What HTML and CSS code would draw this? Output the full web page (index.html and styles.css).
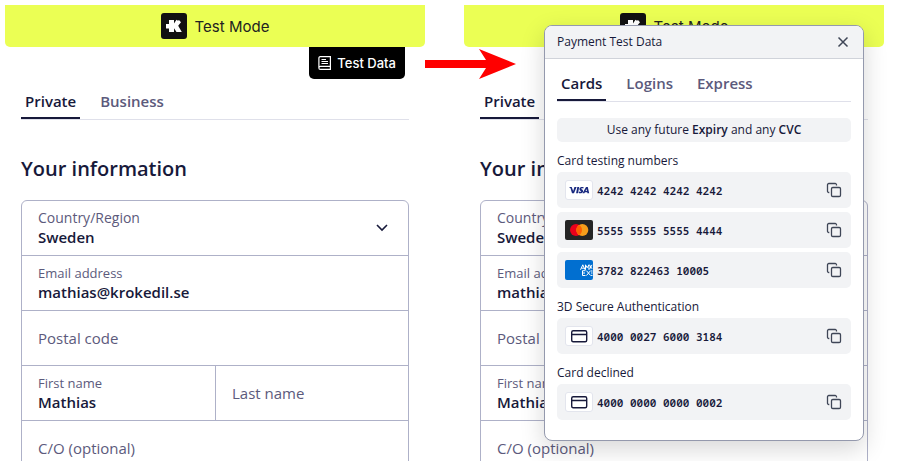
FILE: index.html
```html
<!DOCTYPE html>
<html lang="en">
<head>
    <meta charset="UTF-8">
    <meta name="viewport" content="width=device-width, initial-scale=1.0">
    <title>Payment Test Data</title>
    <link rel="stylesheet" href="styles.css">
</head>
<body>
    <!-- Shared icons -->
    <svg class="sprite" aria-hidden="true">
        <symbol id="icon-logo" viewBox="0 0 26 26">
            <rect width="26" height="26" rx="3" fill="#111"/>
            <path d="M8 7h5v3.500L15.500 6.800 17 7.800l1-.8 2 2.200-2.800 3.500L20.800 19h-5.300l-2.500-3.800V19H8v-3.500H5v-4.500h3z" fill="#fff"/>
        </symbol>
        <symbol id="icon-chevron" viewBox="0 0 12 8">
            <path d="M1 1l5 5 5-5" fill="none" stroke="currentColor" stroke-width="1.600"/>
        </symbol>
        <symbol id="icon-copy" viewBox="0 0 16 16">
            <rect x="5.500" y="5.500" width="9" height="9" rx="1.300" fill="none" stroke="currentColor" stroke-width="1.300"/>
            <path d="M3.300 10.500h-.5A1.300 1.300 0 0 1 1.500 9.200V2.800a1.300 1.300 0 0 1 1.300-1.300h6.400a1.300 1.300 0 0 1 1.300 1.300v.6" fill="none" stroke="currentColor" stroke-width="1.300"/>
        </symbol>
        <symbol id="icon-card" viewBox="0 0 28 20">
            <rect x="6.700" y="4.700" width="15" height="11" rx="1.500" fill="none" stroke="currentColor" stroke-width="1.400"/>
            <path d="M6.500 8.500h15.500" stroke="currentColor" stroke-width="1.400"/>
        </symbol>
    </svg>

    <main class="compare">
        <section class="checkout">
            <div class="banner">
                <svg class="logo" aria-hidden="true"><use href="#icon-logo"/></svg>
                <span>Test Mode</span>
            </div>
            <div class="toolbar">
                <button type="button" class="test-data">
                    <svg width="14" height="16" viewBox="0 0 14 16" fill="none" stroke="currentColor" stroke-width="1.200" aria-hidden="true">
                        <path d="M2.400 1.600h10v9.800h-10a1.500 1.500 0 0 0 0 3h10v-3M.9 13V3a1.400 1.400 0 0 1 1.500-1.400M3.500 4.500h4.500M3.500 6.500h6.500M3.500 8.500h6.500"/>
                    </svg>
                    Test Data
                </button>
            </div>
            <form class="customer">
                <div class="tabs">
                    <button type="button" class="tab active">Private</button>
                    <button type="button" class="tab">Business</button>
                </div>
                <h2>Your information</h2>
                <div class="fields">
                    <label class="field country">
                        <span>Country/Region</span>
                        <select><option>Sweden</option></select>
                        <svg class="chevron" aria-hidden="true"><use href="#icon-chevron"/></svg>
                    </label>
                    <label class="field">
                        <span>Email address</span>
                        <input type="email" value="mathias@krokedil.se">
                    </label>
                    <div class="field">
                        <input type="text" placeholder="Postal code" aria-label="Postal code">
                    </div>
                    <div class="names">
                        <label class="field">
                            <span>First name</span>
                            <input type="text" value="Mathias">
                        </label>
                        <div class="field">
                            <input type="text" placeholder="Last name" aria-label="Last name">
                        </div>
                    </div>
                    <div class="field">
                        <input type="text" placeholder="C/O (optional)" aria-label="C/O (optional)">
                    </div>
                </div>
            </form>
            <svg class="arrow" viewBox="0 0 91 30" aria-hidden="true">
                <path d="M0 11h61L54 0l37 15-37 15 7-11H0z" fill="#f00"/>
            </svg>
        </section>

        <section class="checkout">
            <div class="banner">
                <svg class="logo" aria-hidden="true"><use href="#icon-logo"/></svg>
                <span>Test Mode</span>
            </div>
            <div class="toolbar"></div>
            <form class="customer">
                <div class="tabs">
                    <button type="button" class="tab active">Private</button>
                </div>
                <h2>Your information</h2>
                <div class="fields">
                    <label class="field country">
                        <span>Country/Region</span>
                        <select><option>Sweden</option></select>
                    </label>
                    <label class="field">
                        <span>Email address</span>
                        <input type="email" value="mathias@krokedil.se">
                    </label>
                    <div class="field">
                        <input type="text" placeholder="Postal code" aria-label="Postal code">
                    </div>
                    <div class="names">
                        <label class="field">
                            <span>First name</span>
                            <input type="text" value="Mathias">
                        </label>
                        <div class="field"></div>
                    </div>
                    <div class="field">
                        <input type="text" placeholder="C/O (optional)" aria-label="C/O (optional)">
                    </div>
                </div>
            </form>

            <div class="popup" role="dialog" aria-labelledby="popup-title">
                <div class="popup-header">
                    <h3 id="popup-title">Payment Test Data</h3>
                    <button type="button" class="icon-button" aria-label="Close">
                        <svg width="16" height="16" viewBox="0 0 16 16" aria-hidden="true">
                            <path d="M3.500 3.500l9 9M12.500 3.500l-9 9" stroke="currentColor" stroke-width="1.500"/>
                        </svg>
                    </button>
                </div>
                <div class="popup-body">
                    <div class="tabs">
                        <button type="button" class="tab active">Cards</button>
                        <button type="button" class="tab">Logins</button>
                        <button type="button" class="tab">Express</button>
                    </div>
                    <p class="hint">Use any future <strong>Expiry</strong> and any <strong>CVC</strong></p>

                    <h4>Card testing numbers</h4>
                    <ul class="cards">
                        <li>
                            <svg class="brand framed" viewBox="0 0 28 20" role="img" aria-label="Visa">
                                <g fill="#1a2a80">
                                    <path d="M4 7h2.700l1.500 4L9.400 7h2.200L9 13.200H7L5.500 8.200z"/>
                                    <path d="M12.300 7h1.900l-1.200 6.200h-1.900z"/>
                                    <path d="M18.700 7.200l-.4 1.400c-1.200-.5-2-.3-2 .1 0 .6 2 .8 1.800 2.500-.2 2-2.600 2.500-4.500 1.800l.4-1.500c1.300.6 2.200.3 2.200-.1 0-.7-1.900-.8-1.800-2.500.2-1.800 2.500-2.300 4.300-1.700z"/>
                                    <path d="M21 7h1.800l1.400 6.200h-1.800l-.2-1h-2.300l-.5 1H17.500zM21.500 9l-.9 2h1.300z"/>
                                </g>
                            </svg>
                            <code>4242 4242 4242 4242</code>
                            <button type="button" class="icon-button" aria-label="Copy"><svg width="16" height="16" aria-hidden="true"><use href="#icon-copy"/></svg></button>
                        </li>
                        <li>
                            <svg class="brand" viewBox="0 0 28 20" role="img" aria-label="Mastercard">
                                <rect width="28" height="20" rx="2" fill="#252525"/>
                                <circle cx="11" cy="10" r="6" fill="#eb001b"/>
                                <circle cx="17.300" cy="10" r="6" fill="#f79e1b"/>
                                <path d="M14.150 4.900a6 6 0 0 1 0 10.200 6 6 0 0 1 0-10.200z" fill="#ff5f00"/>
                            </svg>
                            <code>5555 5555 5555 4444</code>
                            <button type="button" class="icon-button" aria-label="Copy"><svg width="16" height="16" aria-hidden="true"><use href="#icon-copy"/></svg></button>
                        </li>
                        <li>
                            <svg class="brand" viewBox="0 0 28 20" role="img" aria-label="American Express">
                                <rect width="28" height="20" rx="2" fill="#016fd0"/>
                                <g fill="none" stroke="#fff" stroke-width="1">
                                    <path d="M15.500 9.800l2.300-5 2.300 5M16.500 8.200h2.600M20.500 9.800v-5l1.700 3 1.700-3v5M24.500 4.800l2.500 4M27 4.800l-2.500 4.500"/>
                                    <path d="M20.500 10.700h-3v4.800h3M17.500 13h2.500M21.500 10.700l4 4.800M25.500 10.700l-4 4.800M26 11h1.500M26 13h1.500M26 15.400h1.500"/>
                                </g>
                            </svg>
                            <code>3782 822463 10005</code>
                            <button type="button" class="icon-button" aria-label="Copy"><svg width="16" height="16" aria-hidden="true"><use href="#icon-copy"/></svg></button>
                        </li>
                    </ul>

                    <h4>3D Secure Authentication</h4>
                    <ul class="cards">
                        <li>
                            <svg class="brand framed" aria-hidden="true"><use href="#icon-card"/></svg>
                            <code>4000 0027 6000 3184</code>
                            <button type="button" class="icon-button" aria-label="Copy"><svg width="16" height="16" aria-hidden="true"><use href="#icon-copy"/></svg></button>
                        </li>
                    </ul>

                    <h4>Card declined</h4>
                    <ul class="cards">
                        <li>
                            <svg class="brand framed" aria-hidden="true"><use href="#icon-card"/></svg>
                            <code>4000 0000 0000 0002</code>
                            <button type="button" class="icon-button" aria-label="Copy"><svg width="16" height="16" aria-hidden="true"><use href="#icon-copy"/></svg></button>
                        </li>
                    </ul>
                </div>
            </div>
        </section>
    </main>
</body>
</html>
```
FILE: styles.css
```css
* {
    box-sizing: border-box;
}
body {
    margin: 0;
    height: 100vh;
    overflow: hidden;
    background-color: #fff;
    color: #17193a;
    font-family: "Open Sans", "Noto Sans", sans-serif;
    font-size: 15px;
}
button, input, select {
    font: inherit;
    color: inherit;
    border: none;
    background: none;
    padding: 0;
}
button {
    cursor: pointer;
}
svg {
    display: block;
    flex-shrink: 0;
}
.sprite {
    position: absolute;
    width: 0;
    height: 0;
}
.compare {
    display: grid;
    grid-template-columns: 1fr 1fr;
    gap: 39px;
    padding: 5px 25px 0 5px;
}
.checkout {
    position: relative;
    min-width: 0;
}
.banner {
    display: flex;
    align-items: center;
    justify-content: center;
    gap: 8px;
    height: 42px;
    background-color: #ebff54;
    color: #222;
    border-radius: 0 0 5px 5px;
    font-family: Inter, sans-serif;
}
.logo {
    width: 26px;
    height: 26px;
}
.toolbar {
    display: flex;
    justify-content: flex-end;
    height: 32px;
    padding-right: 20px;
}
.test-data {
    display: flex;
    align-items: center;
    gap: 5px;
    padding: 0 9px;
    background-color: #000;
    color: #fff;
    border-radius: 0 0 5px 5px;
    font-family: Inter, sans-serif;
    font-size: 13px;
    font-weight: 500;
}
.arrow {
    position: absolute;
    left: 100%;
    top: 44px;
    width: 91px;
    height: 30px;
    z-index: 1;
}

/* Tabs */
.tabs {
    display: flex;
    gap: 16px;
    border-bottom: 1px solid #dfe0ea;
}
.tab {
    padding: 0 4px;
    height: 34px;
    line-height: 32px;
    border-bottom: 2px solid transparent;
    color: #5c5a7c;
    font-weight: 600;
}
.tab.active {
    color: #17193a;
    border-bottom-color: #17193a;
}

/* Customer form */
.customer {
    padding: 6px 16px 0;
}
h2 {
    margin: 34px 0 16px;
    font-size: 20px;
    line-height: 30px;
    font-weight: 600;
}
.fields {
    border: 1px solid #aeb1c8;
    border-radius: 6px;
}
.field {
    display: flex;
    flex-direction: column;
    justify-content: center;
    position: relative;
    height: 55px;
    padding: 0 16px;
    border-bottom: 1px solid #aeb1c8;
}
.field span {
    font-size: 13px;
    line-height: 18px;
    color: #5c5a7c;
}
.country span {
    font-size: 14px;
}
.field input, .field select {
    width: 100%;
    height: 20px;
    line-height: 20px;
    font-weight: 600;
    outline: none;
    appearance: none;
}
.field input::placeholder {
    color: #5c5a7c;
    font-weight: 400;
    opacity: 1;
}
.chevron {
    position: absolute;
    right: 20px;
    top: 23px;
    width: 12px;
    height: 8px;
}
.names {
    display: grid;
    grid-template-columns: 1fr 1fr;
}
.names .field + .field {
    border-left: 1px solid #aeb1c8;
}

/* Test data popup */
.popup {
    position: absolute;
    top: 20px;
    right: 20px;
    width: 320px;
    background-color: #fff;
    border: 1px solid #9499ad;
    border-radius: 8px;
    box-shadow: 0 8px 24px rgba(0, 0, 0, 0.16);
    overflow: hidden;
}
.popup-header {
    display: flex;
    align-items: center;
    justify-content: space-between;
    height: 33px;
    padding: 0 12px;
    background-color: #f2f3f5;
    border-bottom: 1px solid #d0d3da;
}
h3, h4 {
    margin: 0;
    font-size: 12px;
    line-height: 18px;
    font-weight: 500;
}
.icon-button {
    color: #3f4657;
}
.popup-body {
    padding: 8px 12px 20px;
}
.hint {
    margin: 16px 0 0;
    border-radius: 5px;
    background-color: #f2f3f5;
    font-size: 12px;
    line-height: 24px;
    text-align: center;
}
.hint strong {
    font-weight: 600;
}
h4 {
    margin: 10px 0 2px;
}
.cards {
    display: grid;
    gap: 4px;
    margin: 0;
    padding: 0;
    list-style: none;
}
.cards li {
    display: flex;
    align-items: center;
    gap: 4px;
    height: 36px;
    padding: 0 9px 0 8px;
    border-radius: 5px;
    background-color: #f2f3f5;
}
.cards code {
    flex: 1;
    font-family: "Noto Sans Mono", "DejaVu Sans Mono", monospace;
    font-size: 11px;
    font-weight: 600;
}
.brand {
    width: 28px;
    height: 20px;
}
.framed {
    background-color: #fff;
    border-radius: 3px;
    box-shadow: inset 0 0 0 1px #e3e5ed;
}
```
